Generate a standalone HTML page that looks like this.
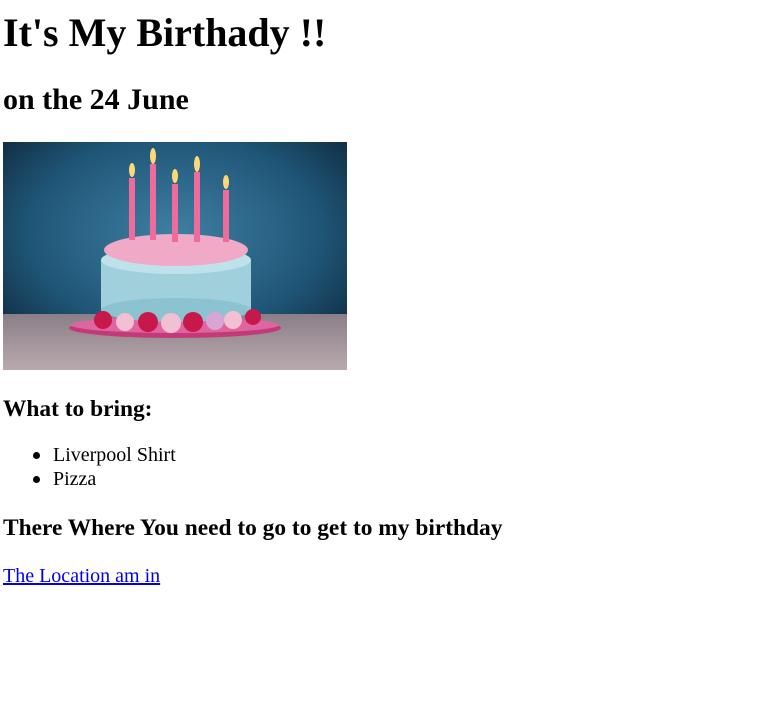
<!DOCTYPE html>
<html><head><meta charset="utf-8"><style>
html,body{margin:0;padding:0;background:#fff;width:762px;height:707px;overflow:hidden}
body{font-family:"Liberation Serif","Times New Roman",serif;color:#000;position:relative}
.t{position:absolute;left:3px;white-space:nowrap;font-weight:bold}
</style></head><body>
<div class="t" style="top:10px;font-size:40px;line-height:46px">It's My Birthady !!</div>
<div class="t" style="top:83px;font-size:30px;line-height:34px">on the 24 June</div>
<svg style="position:absolute;left:3px;top:142px" width="344" height="228" viewBox="0 0 344 228">
<defs>
<radialGradient id="bg" cx="0.5" cy="0.4" r="0.7"><stop offset="0" stop-color="#3f7fa3"/><stop offset="0.6" stop-color="#1f5677"/><stop offset="1" stop-color="#0d2537"/></radialGradient>
<linearGradient id="tb" x1="0" y1="0" x2="0" y2="1"><stop offset="0" stop-color="#8a7f88"/><stop offset="1" stop-color="#b9a9ad"/></linearGradient>
</defs>
<rect width="344" height="228" fill="url(#bg)"/>
<rect y="172" width="344" height="56" fill="url(#tb)"/>
<ellipse cx="172" cy="186" rx="106" ry="10" fill="#c23a77"/>
<ellipse cx="172" cy="183" rx="104" ry="8" fill="#e064a0"/>
<rect x="98" y="118" width="150" height="50" fill="#9fd0dc"/>
<ellipse cx="173" cy="168" rx="75" ry="12" fill="#8cc3d1"/>
<ellipse cx="173" cy="118" rx="75" ry="14" fill="#bfe2ea"/>
<ellipse cx="173" cy="108" rx="72" ry="16" fill="#f0a9c6"/>
<g fill="#c8174a"><circle cx="100" cy="178" r="9"/><circle cx="145" cy="180" r="10"/><circle cx="190" cy="180" r="10"/><circle cx="250" cy="175" r="8"/></g>
<g fill="#f2c0d2"><circle cx="122" cy="180" r="9"/><circle cx="168" cy="181" r="10"/><circle cx="230" cy="178" r="9"/></g>
<circle cx="212" cy="179" r="9" fill="#d9a6d4"/>
<g fill="#ef6b9b"><rect x="126" y="36" width="6" height="62"/><rect x="147" y="22" width="6" height="76"/><rect x="169" y="42" width="6" height="58"/><rect x="191" y="30" width="6" height="70"/><rect x="220" y="48" width="6" height="52"/></g>
<g fill="#ffd777"><ellipse cx="129" cy="28" rx="3" ry="7"/><ellipse cx="150" cy="14" rx="3" ry="8"/><ellipse cx="172" cy="34" rx="3" ry="7"/><ellipse cx="194" cy="22" rx="3" ry="8"/><ellipse cx="223" cy="40" rx="3" ry="7"/></g>
</svg>
<div class="t" style="top:396px;font-size:23.4px;line-height:27px">What to bring:</div>
<div style="position:absolute;left:53px;top:443px;font-size:20px;line-height:24px">
<div style="position:relative">Liverpool Shirt<span style="position:absolute;left:-20px;top:9px;width:7px;height:7px;border-radius:50%;background:#000"></span></div>
<div style="position:relative">Pizza<span style="position:absolute;left:-20px;top:9px;width:7px;height:7px;border-radius:50%;background:#000"></span></div>
</div>
<div class="t" style="top:515px;font-size:23.4px;line-height:27px">There Where You need to go to get to my birthday</div>
<a style="position:absolute;left:3px;top:564px;font-size:20px;line-height:24px;color:#0000ee;text-decoration:underline;white-space:nowrap">The Location am in</a>
</body></html>
